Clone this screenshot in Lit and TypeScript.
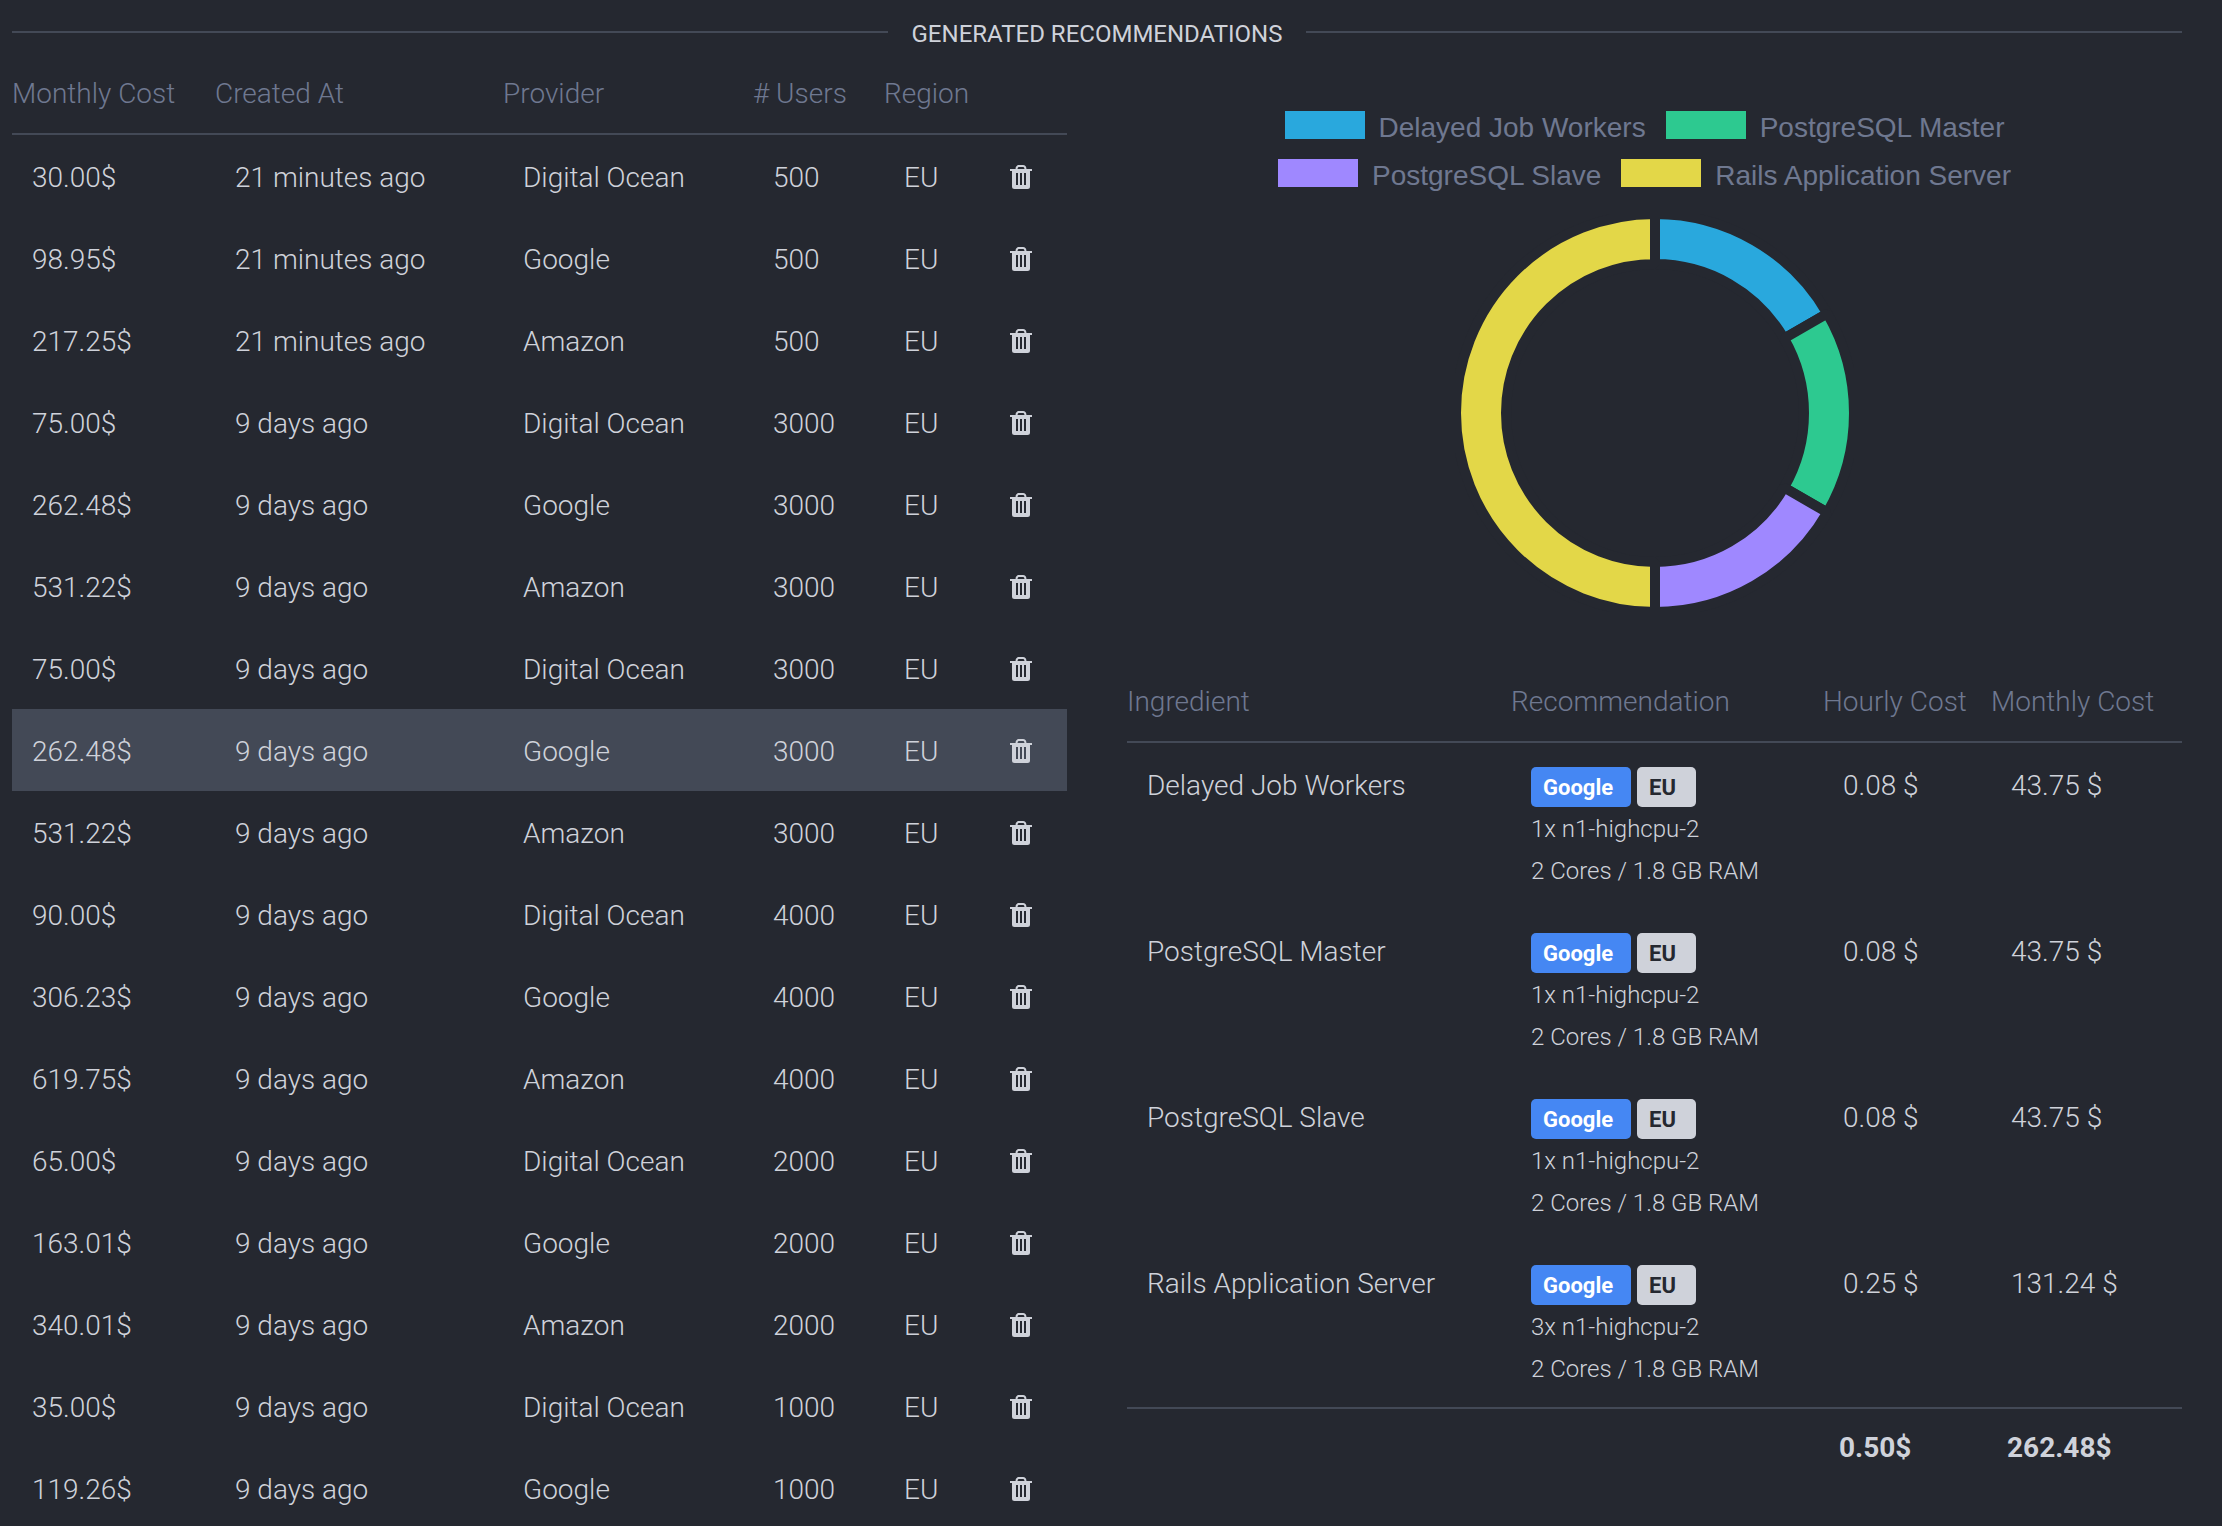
import { LitElement, html, css, svg } from "lit";
import { customElement, state } from "lit/decorators.js";
import { classMap } from "lit/directives/class-map.js";

interface Recommendation {
  cost: string;
  created: string;
  provider: string;
  users: number;
  region: string;
}

interface Ingredient {
  name: string;
  provider: string;
  region: string;
  machine: string;
  specs: string;
  hourly: string;
  monthly: string;
  value: number;
  color: string;
}

const row = (cost: string, created: string, provider: string, users: number): Recommendation => ({
  cost,
  created,
  provider,
  users,
  region: "EU",
});

const RECOMMENDATIONS: Recommendation[] = [
  row("30.00$", "21 minutes ago", "Digital Ocean", 500),
  row("98.95$", "21 minutes ago", "Google", 500),
  row("217.25$", "21 minutes ago", "Amazon", 500),
  row("75.00$", "9 days ago", "Digital Ocean", 3000),
  row("262.48$", "9 days ago", "Google", 3000),
  row("531.22$", "9 days ago", "Amazon", 3000),
  row("75.00$", "9 days ago", "Digital Ocean", 3000),
  row("262.48$", "9 days ago", "Google", 3000),
  row("531.22$", "9 days ago", "Amazon", 3000),
  row("90.00$", "9 days ago", "Digital Ocean", 4000),
  row("306.23$", "9 days ago", "Google", 4000),
  row("619.75$", "9 days ago", "Amazon", 4000),
  row("65.00$", "9 days ago", "Digital Ocean", 2000),
  row("163.01$", "9 days ago", "Google", 2000),
  row("340.01$", "9 days ago", "Amazon", 2000),
  row("35.00$", "9 days ago", "Digital Ocean", 1000),
  row("119.26$", "9 days ago", "Google", 1000),
];

const part = (
  name: string,
  count: number,
  hourly: string,
  monthly: string,
  value: number,
  color: string,
): Ingredient => ({
  name,
  provider: "Google",
  region: "EU",
  machine: `${count}x n1-highcpu-2`,
  specs: "2 Cores / 1.8 GB RAM",
  hourly,
  monthly,
  value,
  color,
});

const INGREDIENTS: Ingredient[] = [
  part("Delayed Job Workers", 1, "0.08 $", "43.75 $", 1, "#29a8dd"),
  part("PostgreSQL Master", 1, "0.08 $", "43.75 $", 1, "#2dc990"),
  part("PostgreSQL Slave", 1, "0.08 $", "43.75 $", 1, "#9f88ff"),
  part("Rails Application Server", 3, "0.25 $", "131.24 $", 3, "#e3d748"),
];

const shared = css`
  * {
    box-sizing: border-box;
  }
  table {
    width: 100%;
    table-layout: fixed;
    border-collapse: separate;
    border-spacing: 0;
    font-size: 28px;
    line-height: 42px;
  }
  th {
    padding: 21px 0 18px;
    border-bottom: 2px solid #434956;
    color: #6f7890;
    font-weight: 300;
    text-align: left;
    white-space: nowrap;
  }
  td {
    padding: 22px 0 18px 20px;
    vertical-align: top;
    white-space: nowrap;
  }
`;

@customElement("recommendation-list")
class RecommendationList extends LitElement {
  @state() private selected = 7;

  static styles = [
    shared,
    css`
      :host {
        display: block;
      }
      .cost { width: 203px; }
      .created { width: 288px; }
      .provider { width: 250px; }
      .users { width: 131px; }
      .region { width: 106px; }
      .actions { width: 77px; }
      .selected td {
        background: #434956;
      }
      .delete {
        display: block;
        margin: 0;
        padding: 8px 0 10px;
        border: 0;
        background: none;
        color: inherit;
        cursor: pointer;
      }
      .trash {
        display: block;
        width: 22px;
        height: 24px;
      }
    `,
  ];

  render() {
    return html`
      <table>
        <colgroup>
          <col class="cost" /><col class="created" /><col class="provider" />
          <col class="users" /><col class="region" /><col class="actions" />
        </colgroup>
        <thead>
          <tr>
            <th scope="col">Monthly Cost</th>
            <th scope="col">Created At</th>
            <th scope="col">Provider</th>
            <th scope="col"># Users</th>
            <th scope="col">Region</th>
            <th></th>
          </tr>
        </thead>
        <tbody>
          ${RECOMMENDATIONS.map(
            (r, i) => html`
              <tr
                class=${classMap({ selected: i === this.selected })}
                @click=${() => (this.selected = i)}
              >
                <td>${r.cost}</td>
                <td>${r.created}</td>
                <td>${r.provider}</td>
                <td>${r.users}</td>
                <td>${r.region}</td>
                <td>
                  <button class="delete" type="button" aria-label="Delete">
                    <svg class="trash" viewBox="0 0 22 24" aria-hidden="true">
                      <path
                        fill="currentColor"
                        fill-rule="evenodd"
                        d="M0 4h5.600V3.400C5.600 1.400 7 0 9 0h4c2 0 3.400 1.400 3.400 3.400V4H22v2h-2v15.500a2.500 2.500 0 0 1-2.500 2.500h-13A2.500 2.500 0 0 1 2 21.500V6H0zM7.600 4h6.800v-.4c0-1-.6-1.600-1.600-1.600H9.200c-1 0-1.600.6-1.600 1.600zM6 8v12h2V8zM10 8v12h2V8zM14 8v12h2V8z"
                      />
                    </svg>
                  </button>
                </td>
              </tr>
            `,
          )}
        </tbody>
      </table>
    `;
  }
}

@customElement("cost-chart")
class CostChart extends LitElement {
  static styles = css`
    :host {
      display: flex;
      flex-direction: column;
      align-items: center;
      gap: 21px;
    }
    .legend {
      display: flex;
      flex-wrap: wrap;
      justify-content: center;
      row-gap: 14px;
      margin: 0;
      padding: 0;
      list-style: none;
      color: #6f7890;
      font: 28px/34px "Liberation Sans", Arial, sans-serif;
    }
    .item {
      display: flex;
      gap: 14px;
      margin-right: 20px;
      white-space: nowrap;
    }
    .swatch {
      width: 80px;
      height: 28px;
    }
    .donut {
      display: block;
      width: 399px;
      height: 398px;
    }
    .slice {
      stroke: #252830;
      stroke-width: 10;
      stroke-linejoin: bevel;
    }
  `;

  private slices() {
    const outer = 199;
    const inner = 149;
    const total = INGREDIENTS.reduce((sum, i) => sum + i.value, 0);
    let angle = -Math.PI / 2;
    return INGREDIENTS.map((item) => {
      const from = angle;
      const to = (angle += (item.value / total) * Math.PI * 2);
      const at = (r: number, a: number) =>
        `${(r * Math.cos(a)).toFixed(2)} ${(r * Math.sin(a)).toFixed(2)}`;
      const large = to - from > Math.PI ? 1 : 0;
      const d =
        `M${at(outer, from)}A${outer} ${outer} 0 ${large} 1 ${at(outer, to)}` +
        `L${at(inner, to)}A${inner} ${inner} 0 ${large} 0 ${at(inner, from)}Z`;
      return svg`<path class="slice" fill=${item.color} d=${d} />`;
    });
  }

  render() {
    return html`
      <ul class="legend">
        ${INGREDIENTS.map(
          (i) => html`
            <li class="item">
              <span class="swatch" style="background:${i.color}"></span>
              <span>${i.name}</span>
            </li>
          `,
        )}
      </ul>
      <svg class="donut" viewBox="-200 -199 399 398" role="img" aria-label="Cost by ingredient">
        ${this.slices()}
      </svg>
    `;
  }
}

@customElement("ingredient-table")
class IngredientTable extends LitElement {
  static styles = [
    shared,
    css`
      :host {
        display: block;
      }
      .name { width: 384px; }
      .advice { width: 312px; }
      .hourly { width: 168px; }
      .monthly { width: 191px; }
      .details {
        padding: 23px 0 17px 20px;
        font-size: 24px;
      }
      .badges {
        display: flex;
        align-items: center;
        gap: 6px;
        height: 42px;
      }
      .badge {
        min-width: 59px;
        padding: 1px 18px 0 12px;
        border-radius: 5px;
        background: #cfd2da;
        color: #252830;
        font-size: 22px;
        font-weight: 700;
        line-height: 39px;
      }
      .google {
        background: #4587f3;
        color: #fff;
      }
      .total {
        padding: 18px 0 20px 16px;
        border-top: 2px solid #434956;
        font-weight: 700;
      }
    `,
  ];

  render() {
    return html`
      <table>
        <colgroup>
          <col class="name" /><col class="advice" /><col class="hourly" /><col class="monthly" />
        </colgroup>
        <thead>
          <tr>
            <th scope="col">Ingredient</th>
            <th scope="col">Recommendation</th>
            <th scope="col">Hourly Cost</th>
            <th scope="col">Monthly Cost</th>
          </tr>
        </thead>
        <tbody>
          ${INGREDIENTS.map(
            (i) => html`
              <tr>
                <td>${i.name}</td>
                <td class="details">
                  <div class="badges">
                    <span class="badge google">${i.provider}</span>
                    <span class="badge">${i.region}</span>
                  </div>
                  <div>${i.machine}</div>
                  <div>${i.specs}</div>
                </td>
                <td>${i.hourly}</td>
                <td>${i.monthly}</td>
              </tr>
            `,
          )}
        </tbody>
        <tfoot>
          <tr>
            <td class="total" colspan="2"></td>
            <td class="total">0.50$</td>
            <td class="total">262.48$</td>
          </tr>
        </tfoot>
      </table>
    `;
  }
}

@customElement("app-root")
class AppRoot extends LitElement {
  static styles = css`
    :host {
      display: block;
      box-sizing: border-box;
      min-height: 100vh;
      padding: 0 40px 0 12px;
      background: #252830;
      color: #cfd2da;
      font-family: Roboto, sans-serif;
      font-weight: 300;
    }
    .heading {
      display: flex;
      align-items: flex-start;
      height: 52px;
    }
    .heading::before,
    .heading::after {
      content: "";
      flex: 1;
      height: 2px;
      margin-top: 31px;
      background: #434956;
    }
    .title {
      margin: 0;
      padding: 17px 24px 0;
      font-size: 24px;
      font-weight: 400;
      line-height: 35px;
      text-transform: uppercase;
    }
    .columns {
      display: grid;
      grid-template-columns: 1fr 1fr;
      align-items: start;
      gap: 60px;
    }
    .summary {
      display: flex;
      flex-direction: column;
      gap: 48px;
      padding-top: 59px;
    }
  `;

  render() {
    return html`
      <header class="heading"><h1 class="title">Generated recommendations</h1></header>
      <main class="columns">
        <recommendation-list></recommendation-list>
        <section class="summary">
          <cost-chart></cost-chart>
          <ingredient-table></ingredient-table>
        </section>
      </main>
    `;
  }
}
